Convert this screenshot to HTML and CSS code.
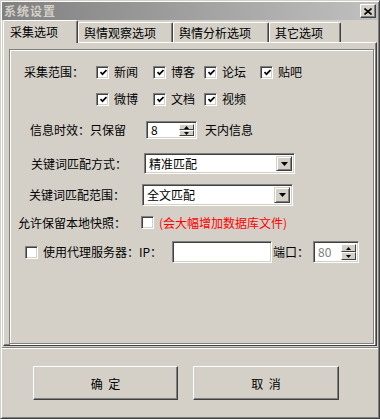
FILE: index.html
```html
<!DOCTYPE html>
<html lang="zh-CN">
<head>
    <meta charset="UTF-8">
    <title>系统设置</title>
    <link rel="stylesheet" href="styles.css">
</head>
<body>
    <div class="window">
        <div class="titlebar">
            <span class="title">系统设置</span>
            <span class="close-btn">
                <svg width="8" height="7" viewBox="0 0 8 7"><path d="M0.5 0.5 L7.5 6.5 M7.5 0.5 L0.5 6.5" stroke="#000" stroke-width="1.6"/></svg>
            </span>
        </div>

        <div class="tabs">
            <div class="tab tab-1 active">采集选项</div>
            <div class="tab tab-2">舆情观察选项</div>
            <div class="tab tab-3">舆情分析选项</div>
            <div class="tab tab-4">其它选项</div>
        </div>

        <div class="tab-page">
            <div class="frame">
                <div class="row row-scope">
                    <span class="label label-scope">采集范围：</span>
                    <div class="check-grid">
                        <label class="check"><span class="box"><svg width="7" height="7" viewBox="0 0 7 7"><path d="M0.5 3 L2.5 5.2 L6.5 1" fill="none" stroke="#000" stroke-width="1.7"/></svg></span>新闻</label>
                        <label class="check"><span class="box"><svg width="7" height="7" viewBox="0 0 7 7"><path d="M0.5 3 L2.5 5.2 L6.5 1" fill="none" stroke="#000" stroke-width="1.7"/></svg></span>博客</label>
                        <label class="check"><span class="box"><svg width="7" height="7" viewBox="0 0 7 7"><path d="M0.5 3 L2.5 5.2 L6.5 1" fill="none" stroke="#000" stroke-width="1.7"/></svg></span>论坛</label>
                        <label class="check"><span class="box"><svg width="7" height="7" viewBox="0 0 7 7"><path d="M0.5 3 L2.5 5.2 L6.5 1" fill="none" stroke="#000" stroke-width="1.7"/></svg></span>贴吧</label>
                    </div>
                </div>

                <div class="row row-scope2">
                    <div class="check-grid">
                        <label class="check"><span class="box"><svg width="7" height="7" viewBox="0 0 7 7"><path d="M0.5 3 L2.5 5.2 L6.5 1" fill="none" stroke="#000" stroke-width="1.7"/></svg></span>微博</label>
                        <label class="check"><span class="box"><svg width="7" height="7" viewBox="0 0 7 7"><path d="M0.5 3 L2.5 5.2 L6.5 1" fill="none" stroke="#000" stroke-width="1.7"/></svg></span>文档</label>
                        <label class="check"><span class="box"><svg width="7" height="7" viewBox="0 0 7 7"><path d="M0.5 3 L2.5 5.2 L6.5 1" fill="none" stroke="#000" stroke-width="1.7"/></svg></span>视频</label>
                    </div>
                </div>

                <div class="row row-days">
                    <span class="label label-days">信息时效：只保留</span>
                    <div class="spin spin-days">
                        <span class="spin-value">8</span>
                        <span class="spin-btns">
                            <span class="spin-btn"><svg width="5" height="3" viewBox="0 0 5 3"><path d="M2.5 0 L5 3 L0 3 Z" fill="#000"/></svg></span>
                            <span class="spin-btn"><svg width="5" height="3" viewBox="0 0 5 3"><path d="M0 0 L5 0 L2.5 3 Z" fill="#000"/></svg></span>
                        </span>
                    </div>
                    <span class="after-spin">天内信息</span>
                </div>

                <div class="row row-mode">
                    <span class="label label-mode">关键词匹配方式：</span>
                    <div class="combo">
                        <span class="combo-text">精准匹配</span>
                        <span class="combo-btn"><svg width="7" height="4" viewBox="0 0 7 4"><path d="M0 0 L7 0 L3.5 4 Z" fill="#000"/></svg></span>
                    </div>
                </div>

                <div class="row row-range">
                    <span class="label label-range">关键词匹配范围：</span>
                    <div class="combo">
                        <span class="combo-text">全文匹配</span>
                        <span class="combo-btn"><svg width="7" height="4" viewBox="0 0 7 4"><path d="M0 0 L7 0 L3.5 4 Z" fill="#000"/></svg></span>
                    </div>
                </div>

                <div class="row row-snapshot">
                    <span class="label label-snapshot">允许保留本地快照：</span>
                    <span class="box"></span>
                    <span class="warn">(会大幅增加数据库文件)</span>
                </div>

                <div class="row row-proxy">
                    <span class="box"></span>
                    <span class="proxy-label">使用代理服务器：IP：</span>
                    <span class="textbox ip-box"></span>
                    <span class="port-label">端口：</span>
                    <div class="spin spin-port">
                        <span class="spin-value disabled">80</span>
                        <span class="spin-btns">
                            <span class="spin-btn"><svg width="5" height="3" viewBox="0 0 5 3"><path d="M2.5 0 L5 3 L0 3 Z" fill="#000"/></svg></span>
                            <span class="spin-btn"><svg width="5" height="3" viewBox="0 0 5 3"><path d="M0 0 L5 0 L2.5 3 Z" fill="#000"/></svg></span>
                        </span>
                    </div>
                </div>
            </div>
        </div>

        <div class="footer">
            <button type="button" class="btn btn-ok">确 定</button>
            <button type="button" class="btn btn-cancel">取 消</button>
        </div>
    </div>
</body>
</html>
```

FILE: styles.css
```css
body {
    margin: 0;
    background: #d4d0c8;
    font-family: "Noto Sans CJK SC", "Liberation Sans", sans-serif;
    font-size: 12px;
    color: #000;
}

.window {
    box-sizing: border-box;
    width: 380px;
    height: 419px;
    padding: 1px;
    border: 1px solid;
    border-color: #d4d0c8 #404040 #404040 #d4d0c8;
    box-shadow: inset 1px 1px 0 #fff, inset -1px -1px 0 #808080;
    display: flex;
    flex-direction: column;
}

/* title bar */
.titlebar {
    height: 18px;
    display: flex;
    justify-content: space-between;
    background: linear-gradient(to right, #808080, #c0c0c0);
}

.title {
    padding-left: 2px;
    line-height: 17px;
    font-weight: bold;
    letter-spacing: 1px;
    color: #d4d0c8;
}

.close-btn {
    box-sizing: border-box;
    width: 16px;
    height: 14px;
    margin: 2px 2px 0 0;
    display: flex;
    align-items: center;
    justify-content: center;
    background: #d4d0c8;
    border: 1px solid;
    border-color: #fff #404040 #404040 #fff;
    box-shadow: inset -1px -1px 0 #808080;
}

/* tabs */
.tabs {
    height: 22px;
    padding-left: 1px;
    display: flex;
    align-items: flex-end;
}

.tab {
    box-sizing: border-box;
    height: 20px;
    padding-left: 5px;
    line-height: 19px;
    border-top: 1px solid #fff;
    border-left: 1px solid #fff;
    border-right: 1px solid #404040;
    border-radius: 2px 2px 0 0;
    box-shadow: inset -1px 0 0 #808080;
}

.tab.active {
    position: relative;
    z-index: 1;
    height: 23px;
    margin-bottom: -1px;
    padding-left: 6px;
    line-height: 21px;
    background: #d4d0c8;
}

.tab-1 { width: 75px; }
.tab-2 { width: 95px; }
.tab-3 { width: 96px; }
.tab-4 { width: 72px; }

.tab-page {
    box-sizing: border-box;
    height: 304px;
    margin: 0 1px;
    padding: 6px 2px 0 5px;
    border: 1px solid;
    border-color: #fff #404040 #404040 #fff;
    box-shadow: inset -1px -1px 0 #808080;
}

.frame {
    box-sizing: border-box;
    height: 295px;
    width: 365px;
    padding-top: 14px;
    border: 1px solid #808080;
    box-shadow: inset 1px 1px 0 #fff, 1px 1px 0 #fff;
}

/* rows */
.row {
    display: flex;
    align-items: center;
}

.label,
.check,
.after-spin,
.warn,
.proxy-label,
.port-label {
    line-height: 16px;
    white-space: nowrap;
}

.row-scope { height: 16px; padding-left: 14px; }
.row-scope2 { height: 16px; margin-top: 11px; padding-left: 86px; }
.row-days { height: 18px; margin-top: 14px; padding-left: 20px; }
.row-mode { height: 21px; margin-top: 14px; padding-left: 21px; }
.row-range { height: 22px; margin-top: 10px; padding-left: 19px; }
.row-snapshot { height: 13px; margin-top: 10px; padding-left: 8px; }
.row-proxy { height: 22px; margin-top: 12px; padding-left: 15px; }

.label-scope { width: 72px; }
.label-days { width: 116px; }
.label-mode { width: 113px; }
.label-range { width: 113px; }
.label-snapshot { width: 123px; }

.check-grid {
    display: grid;
    grid-template-columns: 57px 51px 56px auto;
}

.check {
    display: flex;
    align-items: center;
}

.box {
    box-sizing: border-box;
    width: 13px;
    height: 13px;
    flex: none;
    display: flex;
    align-items: center;
    justify-content: center;
    background: #fff;
    border: 1px solid;
    border-color: #808080 #fff #fff #808080;
    box-shadow: inset 1px 1px 0 #404040, inset -1px -1px 0 #d4d0c8;
}

.check .box {
    margin-right: 5px;
}

.box svg {
    margin: 1px 0 0 1px;
}

/* spin boxes, combos, text fields */
.spin,
.combo,
.textbox {
    box-sizing: border-box;
    display: flex;
    align-items: center;
    background: #fff;
    border: 1px solid;
    border-color: #808080 #fff #fff #808080;
    box-shadow: inset 1px 1px 0 #404040, inset -1px -1px 0 #d4d0c8;
}

.spin {
    padding: 2px;
}

.spin-days {
    width: 51px;
    height: 18px;
}

.spin-port {
    width: 46px;
    height: 22px;
    margin-left: 4px;
}

.spin-value {
    flex: 1;
    padding-left: 2px;
    line-height: 14px;
}

.spin-value.disabled {
    color: #808080;
}

.spin-btns {
    align-self: stretch;
    width: 15px;
    display: flex;
    flex-direction: column;
}

.spin-btn {
    box-sizing: border-box;
    flex: 1;
    display: flex;
    align-items: center;
    justify-content: center;
    background: #d4d0c8;
    border: 1px solid;
    border-color: #fff #404040 #404040 #fff;
}

.after-spin {
    margin-left: 8px;
}

.combo {
    width: 151px;
    height: 100%;
    padding: 2px;
}

.combo-text {
    flex: 1;
    padding-left: 2px;
    line-height: 16px;
}

.combo-btn {
    box-sizing: border-box;
    width: 16px;
    align-self: stretch;
    display: flex;
    align-items: center;
    justify-content: center;
    background: #d4d0c8;
    border: 1px solid;
    border-color: #d4d0c8 #404040 #404040 #d4d0c8;
    box-shadow: inset 1px 1px 0 #fff, inset -1px -1px 0 #808080;
}

.warn {
    margin-left: 5px;
    color: #f00;
}

.proxy-label {
    width: 129px;
    margin-left: 5px;
}

.ip-box {
    width: 100px;
    height: 22px;
}

.port-label {
    margin-left: 1px;
}

/* bottom buttons */
.footer {
    flex: 1;
    margin-top: 1px;
    padding: 18px 0 0 31px;
    display: flex;
    align-items: flex-start;
    gap: 15px;
    border-top: 1px solid #808080;
    box-shadow: inset 0 1px 0 #fff;
}

.btn {
    box-sizing: border-box;
    height: 34px;
    padding: 0;
    font-family: inherit;
    font-size: 12px;
    word-spacing: 3px;
    color: #000;
    background: #d4d0c8;
    border: 1px solid;
    border-color: #fff #404040 #404040 #fff;
    box-shadow: inset -1px -1px 0 #808080;
}

.btn-ok { width: 145px; }
.btn-cancel { width: 146px; }
```
